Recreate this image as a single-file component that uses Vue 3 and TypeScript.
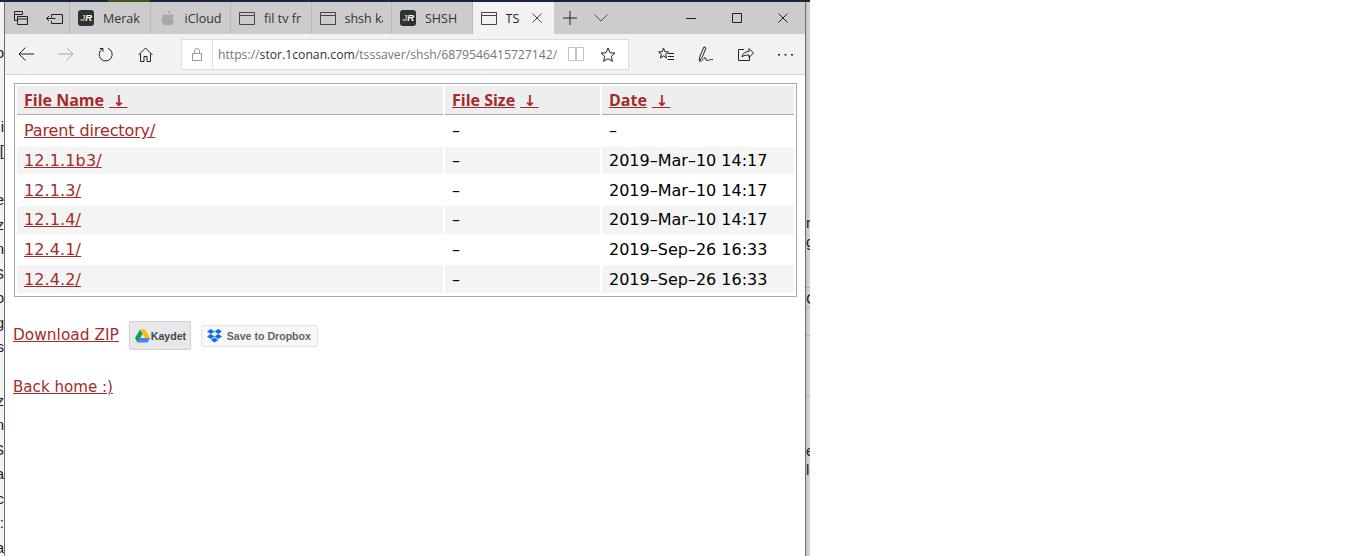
<script setup lang="ts">
interface Tab {
  label: string
  kind: 'jr' | 'apple' | 'page'
}

interface Row {
  name: string
  size: string
  date: string
}

const tabs: Tab[] = [
  { label: 'Merak', kind: 'jr' },
  { label: 'iCloud', kind: 'apple' },
  { label: 'fil tv fr', kind: 'page' },
  { label: 'shsh ka', kind: 'page' },
  { label: 'SHSH', kind: 'jr' },
]

const rows: Row[] = [
  { name: 'Parent directory/', size: '–', date: '–' },
  { name: '12.1.1b3/', size: '–', date: '2019–Mar–10 14:17' },
  { name: '12.1.3/', size: '–', date: '2019–Mar–10 14:17' },
  { name: '12.1.4/', size: '–', date: '2019–Mar–10 14:17' },
  { name: '12.4.1/', size: '–', date: '2019–Sep–26 16:33' },
  { name: '12.4.2/', size: '–', date: '2019–Sep–26 16:33' },
]

const headers = ['File Name', 'File Size', 'Date']

// letters of the windows behind that stick out at the edges
const behindLeftUpper = ['o', '', '', 'i', '[', '', 'e', 'z', 'n', 'S', 'o', 'g', 's']
const behindLeftLower = ['z', 'n', 'S', 'a', 'c', ':', 'la']
const behindRight = ['r', 'g', '', '', 'C', '', '', '', '', '', '', '', 'e', 'le']
</script>

<template>
  <div class="screen">
    <div class="desktop-top"></div>
    <div class="desktop">
      <aside class="behind behind--left">
        <div class="behind__group">
          <span v-for="(ch, i) in behindLeftUpper" :key="i" class="behind__line">{{ ch }}</span>
        </div>
        <div class="behind__group behind__group--lower">
          <span v-for="(ch, i) in behindLeftLower" :key="i" class="behind__line">{{ ch }}</span>
        </div>
      </aside>

      <div class="window">
        <header class="tabbar">
          <div class="tabbar__tools">
            <svg width="16" height="16" viewBox="0 0 16 16" class="icon">
              <path d="M1.500 1.500h8v3h-8zM1.500 4.500v6h3M4.500 6.500h10v8h-10zM4.500 9h10" fill="none" stroke="#222" />
            </svg>
            <svg width="17" height="13" viewBox="0 0 17 13" class="icon">
              <path d="M5.500 5.500v-3h11v9h-11v-2.500M0.500 6.500h9M3 4l-2.500 2.500L3 9" fill="none" stroke="#222" />
            </svg>
          </div>
          <div v-for="tab in tabs" :key="tab.label" class="tab">
            <span v-if="tab.kind === 'jr'" class="jr"><i>J</i>R</span>
            <svg v-else-if="tab.kind === 'apple'" class="tab__icon tab__icon--apple" width="14" height="16" viewBox="0 0 14 16">
              <path d="M9.800 0.500c.1 1.500-1.200 3.200-2.900 3.100-.2-1.500 1.300-3 2.900-3.100zM13.300 11.300c-.7 1.800-2.100 4.200-3.500 4.200-1 0-1.500-.7-2.800-.7s-1.800.7-2.800.7C2.400 15.500.5 11.900.5 9c0-3 1.900-4.700 3.800-4.700 1.200 0 2 .8 2.800.8s1.800-.9 3.200-.9c1.100 0 2.200.5 2.900 1.500-2.400 1.400-2.200 4.800.1 5.600z" fill="#a8a8a8" />
            </svg>
            <svg v-else class="tab__icon" width="16" height="13" viewBox="0 0 16 13">
              <path d="M.5 .5h15v12h-15zM.5 3.500h15" fill="none" stroke="#444" />
            </svg>
            <span class="tab__label">{{ tab.label }}</span>
          </div>
          <div class="tab tab--active">
            <svg class="tab__icon" width="16" height="13" viewBox="0 0 16 13">
              <path d="M.5 .5h15v12h-15zM.5 3.500h15" fill="none" stroke="#444" />
            </svg>
            <span class="tab__label tab__label--active">TS</span>
            <svg class="tab__close" width="10" height="10" viewBox="0 0 10 10">
              <path d="M.5 .5l9 9M9.500 .5l-9 9" fill="none" stroke="#444" />
            </svg>
          </div>
          <svg class="tabbar__plus" width="14" height="14" viewBox="0 0 14 14">
            <path d="M7 0v14M0 7h14" fill="none" stroke="#222" />
          </svg>
          <svg class="tabbar__chevron" width="14" height="8" viewBox="0 0 14 8">
            <path d="M.5 .5L7 7l6.500-6.500" fill="none" stroke="#555" />
          </svg>
          <div class="winctl">
            <svg width="10" height="10" viewBox="0 0 10 10"><path d="M0 5.500h10" stroke="#222" fill="none" /></svg>
            <svg width="10" height="10" viewBox="0 0 10 10"><path d="M.5 .5h9v9h-9z" stroke="#222" fill="none" /></svg>
            <svg width="10" height="10" viewBox="0 0 10 10"><path d="M.5 .5l9 9M9.500 .5l-9 9" stroke="#222" fill="none" /></svg>
          </div>
        </header>

        <nav class="toolbar">
          <div class="toolbar__nav">
            <svg width="16" height="14" viewBox="0 0 16 14"><path d="M16 7H1M7.500 .5L1 7l6.500 6.500" fill="none" stroke="#222" /></svg>
            <svg width="16" height="14" viewBox="0 0 16 14"><path d="M0 7h15M8.500 .5L15 7l-6.500 6.500" fill="none" stroke="#aaa" /></svg>
            <svg width="15" height="15" viewBox="0 0 15 15"><path d="M4.500 1.800A6.500 6.500 0 1 0 10 1.400M1.800 1.500h3.200v3.200" fill="none" stroke="#222" /></svg>
            <svg width="15" height="15" viewBox="0 0 15 15"><path d="M.5 8L7.500 1l7 7M2.500 6.500v8h3.500v-5h3v5h3.500v-8" fill="none" stroke="#222" /></svg>
          </div>
          <div class="address">
            <svg class="address__lock" width="10" height="13" viewBox="0 0 10 13"><path d="M.5 5.500h9v7h-9zM2.500 5.500V3a2.500 2.500 0 0 1 5 0v2.500" fill="none" stroke="#999" /></svg>
            <span class="address__divider"></span>
            <span class="address__url"><b>https://</b>stor.1conan.com<b>/tsssaver/shsh/6879546415727142/</b></span>
            <svg class="address__book" width="16" height="14" viewBox="0 0 16 14"><path d="M.5 .5h7v13h-7zM8.500 .5h7v13h-7z" fill="none" stroke="#c4c4c4" /></svg>
            <svg class="address__star" width="16" height="15" viewBox="0 0 16 15"><path d="M8 1l2 4.700 5 .4-3.800 3.300 1.200 4.900L8 11.700l-4.400 2.600 1.200-4.900L1 6.100l5-.4z" fill="none" stroke="#222" /></svg>
          </div>
          <div class="toolbar__actions">
            <svg width="16" height="15" viewBox="0 0 16 15"><path d="M5.500 1l1.300 3.700 3.700.2-2.900 2.400 1 3.700-3.100-2.100-3.100 2.100 1-3.700L.5 4.900l3.700-.2zM10 6.500h6M10 9.500h6M9.500 12.500h6.500" fill="none" stroke="#222" /></svg>
            <svg width="16" height="17" viewBox="0 0 16 17"><path d="M6 .8L2 10l-.8 5 3-3.800L8 2zM1.500 15.500c3 0 4.500-4 5.500-4s.5 3 2 3 2-1 6-1" fill="none" stroke="#222" /></svg>
            <svg width="16" height="14" viewBox="0 0 16 14"><path d="M6 2.500H.5v11h11V9M4 10c.5-3.500 3-5.500 7-5.500V1.500l4.500 4.500L11 10.500V8C8 8 5.500 8.500 4 10z" fill="none" stroke="#222" /></svg>
            <svg width="15" height="3" viewBox="0 0 15 3"><path d="M0 1h2v1.500H0zM6.500 1h2v1.500h-2zM13 1h2v1.500h-2z" fill="#222" /></svg>
          </div>
        </nav>

        <main class="page">
          <div class="listing">
            <table class="listing__table">
              <colgroup>
                <col class="col-name" />
                <col class="col-size" />
                <col class="col-date" />
              </colgroup>
              <thead>
                <tr>
                  <th v-for="h in headers" :key="h">
                    <a href="#">{{ h }}</a><span class="gap"> </span><a href="#" class="sort">&nbsp;↓&nbsp;</a>
                  </th>
                </tr>
              </thead>
              <tbody>
                <tr v-for="row in rows" :key="row.name">
                  <td class="cell-name"><a href="#">{{ row.name }}</a></td>
                  <td>{{ row.size }}</td>
                  <td>{{ row.date }}</td>
                </tr>
              </tbody>
            </table>
          </div>

          <div class="downloads">
            <a href="#" class="downloads__zip">Download ZIP</a>
            <button class="btn-drive" type="button">
              <svg width="15" height="14" viewBox="0 0 15 14">
                <path d="M5 .5h5l5 8.500h-5z" fill="#fbbc04" />
                <path d="M5 .5L0 9l2.500 4.500L7.500 5z" fill="#0f9d58" />
                <path d="M2.500 13.500h10L15 9H5z" fill="#4285f4" />
              </svg>
              <span>Kaydet</span>
            </button>
            <button class="btn-dropbox" type="button">
              <svg width="15" height="14" viewBox="0 0 15 14">
                <path d="M3.800 0L0 2.600l3.800 2.500 3.700-2.500zM11.200 0L7.500 2.600l3.700 2.500L15 2.600zM0 7.600l3.800 2.500 3.700-2.500-3.700-2.500zM15 7.600l-3.800-2.500-3.700 2.500 3.700 2.500zM3.800 11l3.700 2.500 3.700-2.500-3.700-2.500z" fill="#0d6cf2" />
              </svg>
              <span>Save to Dropbox</span>
            </button>
          </div>

          <p class="home"><a href="#">Back home :)</a></p>
        </main>
      </div>

      <aside class="behind behind--right">
        <span v-for="(ch, i) in behindRight" :key="i" class="behind__line">{{ ch }}</span>
      </aside>
    </div>
  </div>
</template>

<style>
html,
body {
  margin: 0;
  height: 100%;
  overflow: hidden;
  background: #fff;
}
</style>

<style scoped>
.screen {
  display: flex;
  flex-direction: column;
  width: 1361px;
  height: 556px;
  background: #fff;
  overflow: hidden;
}

.desktop-top {
  flex: 0 0 2px;
  width: 810px;
  background: linear-gradient(90deg, #16263c 0 108px, #3a5a1c 108px 150px, #16263c 150px 100%);
}

.desktop {
  display: flex;
  flex: 1;
  min-height: 0;
}

.behind {
  display: flex;
  flex-direction: column;
  flex: 0 0 auto;
  overflow: hidden;
  font-family: "Liberation Sans", sans-serif;
  font-size: 15px;
  color: #222;
}

.behind--left {
  width: 4px;
  padding-top: 39px;
  box-sizing: border-box;
  background: #f3f3f3;
}

.behind__group {
  display: flex;
  flex-direction: column;
  align-items: flex-end;
}

.behind__group--lower {
  margin-top: 29px;
}

.behind--right {
  width: 4px;
  padding-top: 211px;
  box-sizing: border-box;
  align-items: flex-start;
  background:
    linear-gradient(#aaa, #aaa) 0 285px / 100% 1px no-repeat,
    linear-gradient(#aaa, #aaa) 0 305px / 100% 1px no-repeat,
    linear-gradient(#b4b4b4, #b4b4b4) 0 333px / 100% 1px no-repeat,
    linear-gradient(#b4b4b4, #b4b4b4) 0 393px / 100% 1px no-repeat,
    linear-gradient(90deg, #c4c4c4, #d8d8d8);
}

.behind__line {
  flex: 0 0 24.5px;
  line-height: 24.5px;
}

.behind--right .behind__line {
  flex-basis: 19px;
  line-height: 19px;
}

.window {
  display: flex;
  flex-direction: column;
  width: 800px;
  border-left: 1px solid #6e6e6e;
  border-right: 1px solid #6e6e6e;
  background: #fff;
}

.tabbar {
  display: flex;
  align-items: stretch;
  height: 32px;
  background: #cccccc;
  font-family: "Open Sans", "Noto Sans", sans-serif;
  font-size: 12.5px;
  color: #333;
}

.tabbar__tools {
  display: flex;
  align-items: center;
  gap: 17px;
  width: 56px;
  padding-left: 8px;
  border-right: 1px solid #b4b4b4;
}

.icon {
  flex: none;
}

.tab {
  display: flex;
  align-items: center;
  gap: 9px;
  width: 71.5px;
  padding-left: 8px;
  border-right: 1px solid #b9b9b9;
  white-space: nowrap;
  overflow: hidden;
}

.tab__icon {
  flex: none;
}

.tab__icon--apple {
  margin-left: 2px;
  margin-right: 1px;
}

.tab__label {
  width: 38px;
  overflow: hidden;
}

.tab--active {
  width: 73px;
  background: #f2f2f2;
  border-right: none;
}

.tab__label--active {
  width: 14px;
  color: #222;
}

.tab__close {
  flex: none;
  margin-left: 3px;
}

.jr {
  flex: none;
  width: 16px;
  height: 16px;
  border-radius: 3px;
  background: #2b3238;
  color: #fff;
  font: italic 700 9.5px/16px "Liberation Sans", sans-serif;
  text-align: center;
}

.jr i {
  color: #e3b04b;
}

.tabbar__plus {
  align-self: center;
  margin-left: 9px;
}

.tabbar__chevron {
  align-self: center;
  margin-left: 17px;
}

.winctl {
  display: flex;
  align-items: center;
  gap: 36px;
  margin-left: auto;
  padding-right: 17px;
}

.toolbar {
  display: flex;
  align-items: center;
  height: 40px;
  background: #f2f2f2;
  border-bottom: 1px solid #d4d4d4;
  box-sizing: content-box;
}

.toolbar__nav {
  display: grid;
  grid-template-columns: repeat(4, 40px);
  align-items: center;
  width: 176px;
  padding-left: 13px;
  box-sizing: border-box;
}

.address {
  display: flex;
  align-items: center;
  width: 448px;
  height: 31px;
  box-sizing: border-box;
  background: #fff;
  border: 1px solid #dcdcdc;
  font-family: "Open Sans", "Noto Sans", sans-serif;
  font-size: 12.2px;
  color: #333;
}

.address__lock {
  margin-left: 10px;
}

.address__divider {
  width: 1px;
  height: 29px;
  margin-left: 10px;
  background: #e4e4e4;
}

.address__url {
  margin-left: 5px;
  white-space: nowrap;
}

.address__url b {
  font-weight: 400;
  color: #767676;
}

.address__book {
  margin-left: 11px;
}

.address__star {
  margin-left: 16px;
}

.toolbar__actions {
  display: flex;
  align-items: center;
  gap: 24px;
  margin-left: 29px;
}

.page {
  flex: 1;
  padding: 8px 8px 0;
  font-family: "DejaVu Sans", sans-serif;
  font-size: 15.4px;
  color: #000;
}

.page a {
  color: #a52a2a;
}

.listing {
  width: 783px;
  margin-left: 1px;
  box-sizing: border-box;
  border: 1px solid #aaa;
  padding: 1px;
}

.listing__table {
  width: calc(100% + 2px);
  table-layout: fixed;
  border-collapse: separate;
  border-spacing: 2px;
  margin: -1px 0 0 -1px;
}

.col-name {
  width: 426px;
}

.col-size {
  width: 155px;
}

th {
  height: 28px;
  padding: 0 7px;
  background: #eee;
  border-bottom: 1px solid #aaa;
  text-align: left;
  font-family: "Open Sans", sans-serif;
  font-size: 16px;
  font-weight: 700;
  white-space: nowrap;
}

.gap {
  display: inline-block;
  width: 5px;
}

.sort {
  font-family: "DejaVu Sans", sans-serif;
  font-size: 15px;
  font-weight: 700;
  letter-spacing: -1.5px;
}

td {
  height: 27.7px;
  padding: 0 7px;
  box-sizing: border-box;
  font-size: 16px;
  white-space: nowrap;
}

.cell-name {
  letter-spacing: 0.12px;
}

tbody tr:first-child .cell-name {
  letter-spacing: -0.12px;
}

tbody tr:nth-child(even) td {
  background: #f4f4f4;
}

.downloads {
  display: flex;
  align-items: center;
  margin-top: 24px;
}

.downloads__zip {
  margin-bottom: 2px;
}

.btn-drive,
.btn-dropbox {
  display: inline-flex;
  align-items: center;
  box-sizing: border-box;
  font-family: "Liberation Sans", sans-serif;
  font-weight: 700;
  font-size: 10.6px;
  padding: 0;
  white-space: nowrap;
}

.btn-drive {
  gap: 1px;
  width: 62px;
  height: 29px;
  margin-left: 10px;
  padding-left: 5px;
  background: #e8e8e8;
  border: 1px solid #cfcfcf;
  border-radius: 2px;
  color: #3c4a55;
}

.btn-dropbox {
  gap: 5px;
  width: 117px;
  height: 22px;
  margin-left: 10px;
  padding-left: 5px;
  background: #f7f7f7;
  border: 1px solid #e4e4e4;
  border-radius: 3px;
  color: #5c6570;
}

.home {
  margin: 28px 0 0;
  font-size: 15.1px;
}
</style>
